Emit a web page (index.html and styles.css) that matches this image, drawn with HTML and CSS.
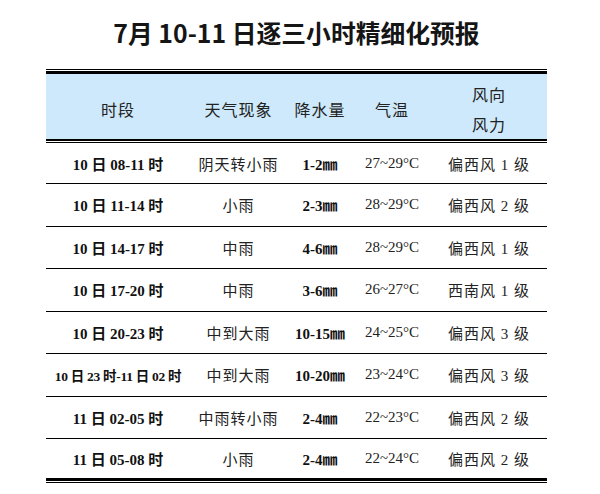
FILE: index.html
```html
<!DOCTYPE html>
<html lang="zh">
<head>
<meta charset="utf-8">
<link rel="stylesheet" href="styles.css">
</head>
<body>
<div class="page">
  <h1 class="title">7月 10-11 日逐三小时精细化预报</h1>
  <div class="sheet">
    <table class="grid">
      <colgroup>
        <col class="c1"><col class="c2"><col class="c3"><col class="c4"><col class="c5">
      </colgroup>
      <thead>
        <tr>
          <th>时段</th>
          <th>天气现象</th>
          <th>降水量</th>
          <th>气温</th>
          <th><div class="two">风向</div><div class="two">风力</div></th>
        </tr>
      </thead>
      <tbody>
        <tr class="first"><td class="when">10 日 08-11 时</td><td class="wx">阴天转小雨</td><td class="rain">1-2㎜</td><td class="temp">27~29°C</td><td class="wind">偏西风 1 级</td></tr>
        <tr><td class="when">10 日 11-14 时</td><td class="wx">小雨</td><td class="rain">2-3㎜</td><td class="temp">28~29°C</td><td class="wind">偏西风 2 级</td></tr>
        <tr><td class="when">10 日 14-17 时</td><td class="wx">中雨</td><td class="rain">4-6㎜</td><td class="temp">28~29°C</td><td class="wind">偏西风 1 级</td></tr>
        <tr><td class="when">10 日 17-20 时</td><td class="wx">中雨</td><td class="rain">3-6㎜</td><td class="temp">26~27°C</td><td class="wind">西南风 1 级</td></tr>
        <tr><td class="when">10 日 20-23 时</td><td class="wx">中到大雨</td><td class="rain">10-15㎜</td><td class="temp">24~25°C</td><td class="wind">偏西风 3 级</td></tr>
        <tr><td class="when tight">10 日 23 时-11 日 02 时</td><td class="wx">中到大雨</td><td class="rain">10-20㎜</td><td class="temp">23~24°C</td><td class="wind">偏西风 3 级</td></tr>
        <tr><td class="when">11 日 02-05 时</td><td class="wx">中雨转小雨</td><td class="rain">2-4㎜</td><td class="temp">22~23°C</td><td class="wind">偏西风 2 级</td></tr>
        <tr class="last"><td class="when">11 日 05-08 时</td><td class="wx">小雨</td><td class="rain">2-4㎜</td><td class="temp">22~24°C</td><td class="wind">偏西风 2 级</td></tr>
      </tbody>
    </table>
  </div>
</div>
</body>
</html>
```

FILE: styles.css
```css
html, body {
  margin: 0;
  padding: 0;
  background: #ffffff;
}

.page {
  width: 501px;
  margin-left: 46px;
  padding-top: 14px;
}

.title {
  margin: 0 0 19px 0;
  text-align: center;
  font-family: "Noto Sans CJK SC", "Liberation Sans", sans-serif;
  font-weight: 700;
  font-size: 24.8px;
  line-height: 36px;
  color: #151515;
}

.sheet {
  border-top: 1px solid #000;
  border-bottom: 1px solid #000;
  padding: 1px 0;
}

.grid {
  width: 501px;
  table-layout: fixed;
  border-collapse: separate;
  border-spacing: 0;
  border-top: 3px solid #000;
  border-bottom: 3px solid #000;
  font-family: "Liberation Serif", "Noto Sans CJK SC", serif;
  color: #1c1c1c;
}

.c1 { width: 144px; }
.c2 { width: 97px; }
.c3 { width: 66px; }
.c4 { width: 78px; }
.c5 { width: 116px; }

.grid th {
  background: #cde9fb;
  height: 59px;
  padding: 5px 0 0 0;
  font-weight: 400;
  font-size: 16px;
  letter-spacing: 1px;
  text-align: center;
  vertical-align: middle;
  border-bottom: 1px solid #000;
  font-family: "Noto Sans CJK SC", serif;
  color: #222;
}

.two {
  line-height: 30px;
}

.grid td {
  text-align: center;
  vertical-align: middle;
  padding: 0;
  height: 41.5px;
  border-top: 1px solid #000;
  font-size: 15px;
}

.grid tr.first td {
  border-top: 3px double #000;
  height: 40px;
}

.grid tr.last td {
  height: 39px;
}

.when {
  font-weight: 700;
  font-size: 16px;
  color: #111;
}

.when.tight {
  font-size: 13.5px;
  letter-spacing: -0.3px;
}

.wx {
  font-family: "Noto Sans CJK SC", serif;
  letter-spacing: 1px;
  color: #222;
}

.rain {
  font-weight: 700;
  font-size: 17.5px;
  color: #111;
}

.temp {
  font-size: 17px;
  color: #222;
}

.wind {
  font-family: "Liberation Serif", "Noto Sans CJK SC", serif;
  letter-spacing: 1px;
  color: #222;
}
```
